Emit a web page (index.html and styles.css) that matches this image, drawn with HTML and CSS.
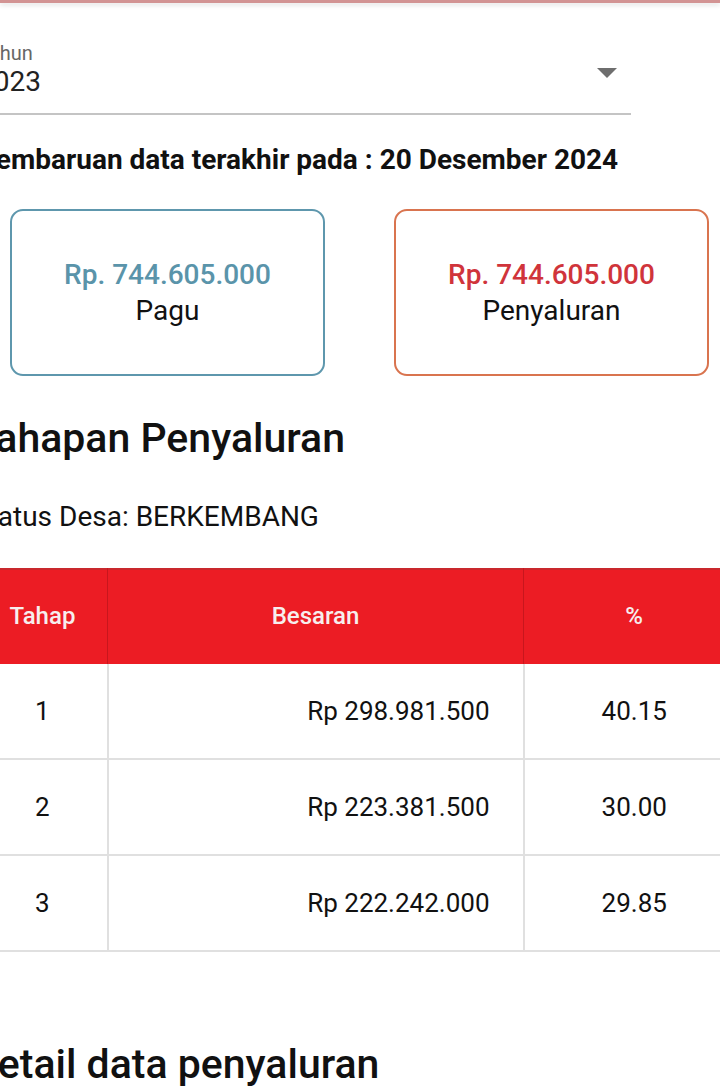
FILE: index.html
```html
<!DOCTYPE html>
<html lang="id">
<head>
<meta charset="utf-8">
<title>Tahapan Penyaluran</title>
<link rel="stylesheet" href="styles.css">
</head>
<body>
<div class="appbar"></div>
<main class="page">
  <div class="field">
    <div class="field-text">
      <div class="field-label">Tahun</div>
      <div class="field-value">2023</div>
    </div>
    <span class="field-arrow"></span>
  </div>

  <p class="update">Pembaruan data terakhir pada : 20 Desember 2024</p>

  <div class="cards">
    <div class="card card-pagu">
      <div class="card-amount">Rp. 744.605.000</div>
      <div class="card-label">Pagu</div>
    </div>
    <div class="card card-salur">
      <div class="card-amount">Rp. 744.605.000</div>
      <div class="card-label">Penyaluran</div>
    </div>
  </div>

  <h2 class="section-title">Tahapan Penyaluran</h2>
  <p class="status">Status Desa: BERKEMBANG</p>

  <table class="stages">
    <thead>
      <tr><th class="c-tahap">Tahap</th><th class="c-besaran">Besaran</th><th class="c-pct">%</th></tr>
    </thead>
    <tbody>
      <tr><td class="c-tahap">1</td><td class="c-besaran num">Rp 298.981.500</td><td class="c-pct">40.15</td></tr>
      <tr><td class="c-tahap">2</td><td class="c-besaran num">Rp 223.381.500</td><td class="c-pct">30.00</td></tr>
      <tr><td class="c-tahap">3</td><td class="c-besaran num">Rp 222.242.000</td><td class="c-pct">29.85</td></tr>
    </tbody>
  </table>

  <h2 class="section-title detail">Detail data penyaluran</h2>
</main>
</body>
</html>
```

FILE: styles.css
```css
html, body {
  margin: 0;
  padding: 0;
  background: #ffffff;
  overflow: hidden;
}

body {
  font-family: Roboto, "Noto Sans", "Liberation Sans", sans-serif;
  color: #111;
  width: 720px;
  height: 1086px;
}

.appbar {
  height: 3px;
  background: #d29393;
  box-shadow: 0 2px 5px rgba(0, 0, 0, 0.14);
}

.page {
  margin-left: -22px;
  width: 764px;
}

.field {
  margin-top: 38px;
  width: 653px;
  display: flex;
  align-items: center;
  justify-content: space-between;
  border-bottom: 2px solid #c4c4c4;
  padding-bottom: 14px;
}

.field-label {
  font-size: 20px;
  line-height: 24px;
  color: #666;
}

.field-value {
  font-size: 28px;
  line-height: 34px;
  color: #222;
}

.field-arrow {
  width: 0;
  height: 0;
  border-left: 10px solid transparent;
  border-right: 10px solid transparent;
  border-top: 10px solid #6e6e6e;
  margin-right: 14px;
  margin-top: 6px;
}

.update {
  margin: 29px 0 0 0;
  font-size: 28px;
  line-height: 32px;
  font-weight: 700;
  color: #111;
}

.cards {
  margin-top: 33px;
  padding-left: 32px;
  display: grid;
  grid-template-columns: 315px 315px;
  column-gap: 69px;
}

.card {
  height: 167px;
  box-sizing: border-box;
  border: 2px solid;
  border-radius: 13px;
  display: flex;
  flex-direction: column;
  align-items: center;
  justify-content: center;
  gap: 4px;
}

.card-pagu { border-color: #5e97ad; }
.card-salur { border-color: #d9744f; }

.card-amount {
  font-size: 28px;
  line-height: 32px;
  font-weight: 500;
}

.card-pagu .card-amount { color: #5a94aa; }
.card-salur .card-amount { color: #d0343b; }

.card-label {
  font-size: 28px;
  line-height: 32px;
  color: #111;
}

.section-title {
  margin: 38px 0 0 0;
  font-size: 41px;
  line-height: 48px;
  font-weight: 500;
  color: #111;
  text-indent: -5px;
}

.status {
  margin: 39px 0 0 0;
  font-size: 28px;
  line-height: 32px;
  color: #111;
  text-indent: -6px;
}

.stages {
  margin-top: 35px;
  width: 764px;
  border-collapse: collapse;
  table-layout: fixed;
  font-size: 26px;
}

.stages th {
  background: #ec1c24;
  color: #f7eeee;
  font-size: 24px;
  font-weight: 500;
  height: 96px;
  padding: 0;
  text-align: center;
  box-shadow: inset 0 2px 0 #c9282d;
  border-left: 1px solid #c8161d;
}

.stages th:first-child { border-left: none; }

.stages td {
  height: 94px;
  padding: 0;
  text-align: center;
  color: #111;
  border-bottom: 2px solid #e0e0e0;
  border-left: 2px solid #e0e0e0;
}

.stages td:first-child { border-left: none; }

.c-tahap { width: 129px; }
.c-besaran { width: 415px; }
.c-pct { width: 220px; }

.stages td.num {
  text-align: right;
  padding-right: 33px;
}

.section-title.detail {
  margin-top: 88px;
  text-indent: -7px;
}
```
